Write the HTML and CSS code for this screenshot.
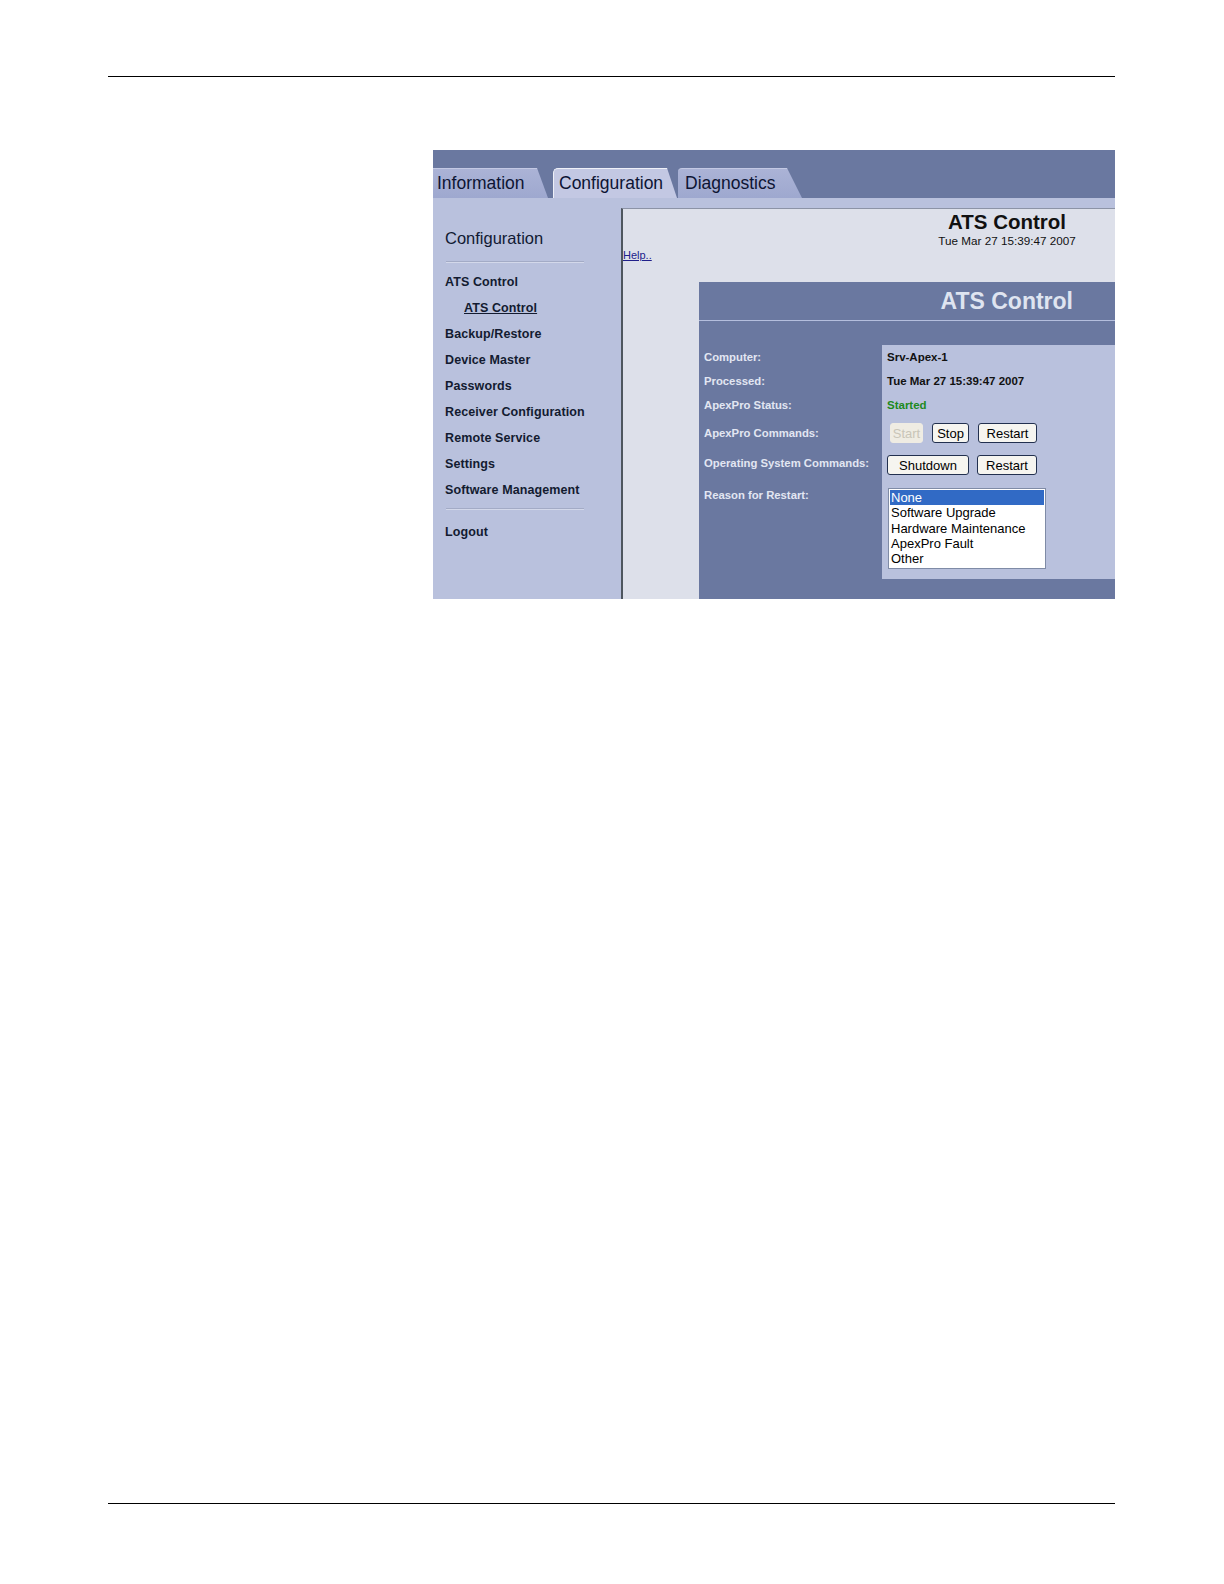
FILE: index.html
```html
<!DOCTYPE html>
<html lang="en">
<head>
<meta charset="utf-8">
<title>ATS Control</title>
<link rel="stylesheet" href="styles.css">
</head>
<body>
<div class="page">
  <div class="rule"></div>
  <div class="shot">
    <div class="tabbar">
      <div class="tab tab-info">Information</div>
      <div class="tab tab-active">Configuration</div>
      <div class="tab tab-diag">Diagnostics</div>
    </div>
    <div class="main">
      <nav class="nav">
        <div class="nav-title">Configuration</div>
        <div class="sep"></div>
        <ul class="nav-list">
          <li>ATS Control</li>
          <li class="sub">ATS Control</li>
          <li>Backup/Restore</li>
          <li>Device Master</li>
          <li>Passwords</li>
          <li>Receiver Configuration</li>
          <li>Remote Service</li>
          <li>Settings</li>
          <li>Software Management</li>
        </ul>
        <div class="sep sep-2"></div>
        <ul class="nav-list logout">
          <li>Logout</li>
        </ul>
      </nav>
      <div class="content">
        <div class="frame">
          <div class="head">
            <div class="title">ATS Control</div>
            <div class="date">Tue Mar 27 15:39:47 2007</div>
          </div>
          <a class="help" href="#">Help..</a>
          <div class="panel">
            <div class="panel-head">ATS Control</div>
            <div class="grid">
              <div class="lbl">Computer:</div>
              <div class="val">Srv-Apex-1</div>
              <div class="lbl">Processed:</div>
              <div class="val">Tue Mar 27 15:39:47 2007</div>
              <div class="lbl">ApexPro Status:</div>
              <div class="val started">Started</div>
              <div class="lbl">ApexPro Commands:</div>
              <div class="val">
                <span class="btn btn-start">Start</span>
                <span class="btn btn-stop">Stop</span>
                <span class="btn btn-restart">Restart</span>
              </div>
              <div class="lbl">Operating System Commands:</div>
              <div class="val val-top">
                <span class="btn btn-shutdown">Shutdown</span>
                <span class="btn btn-restart2">Restart</span>
              </div>
              <div class="lbl lbl-top">Reason for Restart:</div>
              <div class="val val-list">
                <div class="listbox" role="listbox">
                  <div class="opt opt-sel">None</div>
                  <div class="opt">Software Upgrade</div>
                  <div class="opt">Hardware Maintenance</div>
                  <div class="opt">ApexPro Fault</div>
                  <div class="opt">Other</div>
                </div>
              </div>
            </div>
          </div>
        </div>
      </div>
    </div>
  </div>
  <div class="rule rule-bottom"></div>
</div>
</body>
</html>
```

FILE: styles.css
```css
html, body {
  margin: 0;
  padding: 0;
  background: #ffffff;
}

body {
  font-family: "Liberation Sans", Arial, sans-serif;
  color: #111;
}

.page {
  margin-left: 108px;
  width: 1007px;
  padding-top: 76px;
}

.rule {
  height: 1px;
  background: #000;
}

.rule-bottom {
  margin-top: 904px;
}

.shot {
  margin-top: 73px;
  margin-left: 325px;
  width: 682px;
  height: 449px;
  overflow: hidden;
  display: flex;
  flex-direction: column;
}

/* Tabs */
.tabbar {
  height: 48px;
  flex: none;
  background: #6a78a0;
  display: flex;
  align-items: flex-end;
}

.tab {
  height: 30px;
  box-sizing: border-box;
  display: flex;
  align-items: center;
  font-size: 17.5px;
  color: #0d1433;
  background: linear-gradient(#abb3d6, #9ea8cf);
  border-top: 1px solid #c3c9e4;
}

.tab-info {
  width: 115px;
  padding-left: 4px;
  clip-path: polygon(0 0, calc(100% - 11px) 0, 100% 100%, 0 100%);
}

.tab-active {
  width: 124px;
  margin-left: 5px;
  padding-left: 5px;
  background: #c3c8e3;
  border-top: 1px solid #eef0f8;
  border-left: 1px solid #eef0f8;
  border-top-left-radius: 5px;
  clip-path: polygon(0 0, calc(100% - 10px) 0, 100% 100%, 0 100%);
}

.tab-diag {
  width: 124px;
  margin-left: 1px;
  padding-left: 7px;
  border-top-left-radius: 4px;
  clip-path: polygon(0 0, calc(100% - 15px) 0, 100% 100%, 0 100%);
}

/* Main area */
.main {
  flex: 1;
  display: flex;
  min-height: 0;
}

.nav {
  width: 188px;
  flex: none;
  box-sizing: border-box;
  background: #b9c1dd;
  padding: 30px 0 0 12px;
}

.nav-title {
  font-size: 16.5px;
  line-height: 20px;
  color: #111a33;
}

.sep {
  width: 138px;
  margin: 13px 0 6px 1px;
  border-top: 1px solid #a3abc6;
  border-bottom: 1px solid #d3d8ea;
}

.sep-2 {
  margin-top: 5px;
  margin-bottom: 9px;
}

.nav-list {
  list-style: none;
  margin: 0;
  padding: 0;
}

.nav-list li {
  font-size: 12.5px;
  font-weight: bold;
  letter-spacing: 0.1px;
  line-height: 26px;
  color: #131b30;
  white-space: nowrap;
}

.nav-list li.sub {
  padding-left: 19px;
  text-decoration: underline;
}

.content {
  flex: 1;
  display: flex;
  flex-direction: column;
  background: #b9c1dd;
  padding-top: 10px;
}

.frame {
  flex: 1;
  display: flex;
  flex-direction: column;
  background: #dde0ea;
  border-top: 1px solid #8c93a6;
  border-left: 2px solid #4e565f;
}

.head {
  width: 150px;
  margin-left: auto;
  margin-right: 33px;
  padding-top: 1px;
  text-align: center;
}

.title {
  font-size: 20.5px;
  font-weight: bold;
  line-height: 24px;
  color: #111;
}

.date {
  font-size: 11.7px;
  line-height: 14px;
  color: #111;
  white-space: nowrap;
}

.help {
  display: block;
  align-self: flex-start;
  margin-top: 1px;
  font-size: 11px;
  line-height: 13px;
  color: #20208a;
  text-decoration: underline;
}

.panel {
  flex: 1;
  margin-top: 20px;
  margin-left: 76px;
  background: #6a78a0;
}

.panel-head {
  height: 38px;
  border-bottom: 1px solid #b4bedd;
  text-align: right;
  padding-right: 42px;
  font-size: 23px;
  font-weight: bold;
  line-height: 38px;
  color: #dfe4f0;
}

.grid {
  margin-top: 24px;
  display: grid;
  grid-template-columns: 183px 1fr;
  grid-template-rows: 24px 24px 24px 32px 28px auto;
}

.lbl {
  display: flex;
  align-items: center;
  padding-left: 5px;
  font-size: 11.3px;
  font-weight: bold;
  color: #e2e6f2;
  white-space: nowrap;
}

.lbl-top {
  align-items: flex-start;
  padding-top: 11px;
  line-height: 14px;
}

.val {
  display: flex;
  align-items: center;
  padding-left: 5px;
  background: #b9c1dd;
  font-size: 11.5px;
  font-weight: bold;
  color: #111;
  white-space: nowrap;
}

.started {
  color: #1d8a1d;
}

.val-top {
  align-items: flex-start;
  padding-top: 6px;
}

.val-list {
  align-items: flex-start;
  padding-top: 11px;
  padding-bottom: 10px;
}

/* Buttons */
.btn {
  display: inline-flex;
  align-items: center;
  justify-content: center;
  height: 20px;
  box-sizing: border-box;
  border: 1px solid #22304f;
  border-radius: 3px;
  background: #f6f5f0;
  font-size: 13px;
  font-weight: normal;
  color: #000;
}

.btn-start {
  width: 33px;
  margin-left: 3px;
  border-color: #efece3;
  background: #efece3;
  color: #c9c5b8;
}

.btn-stop {
  width: 37px;
  margin-left: 9px;
}

.btn-restart {
  width: 59px;
  margin-left: 9px;
}

.btn-shutdown {
  width: 82px;
}

.btn-restart2 {
  width: 60px;
  margin-left: 8px;
}

/* Listbox */
.listbox {
  width: 158px;
  height: 81px;
  box-sizing: border-box;
  margin-left: 1px;
  border: 1px solid #7f8ba6;
  background: #fff;
  padding: 0 1px;
}

.opt {
  font-size: 13px;
  font-weight: normal;
  line-height: 15.3px;
  padding-left: 1px;
  color: #000;
}

.opt-sel {
  margin-top: 1px;
  background: #316ac5;
  color: #fff;
}
```
